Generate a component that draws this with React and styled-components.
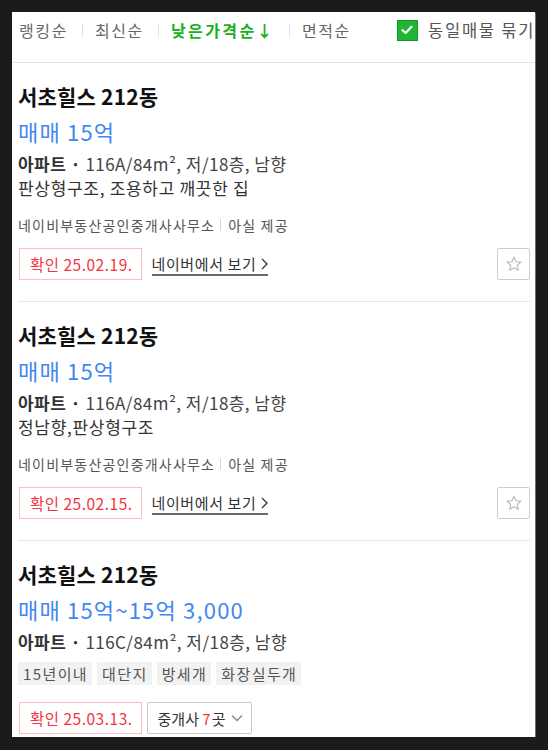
import styled, { createGlobalStyle } from "styled-components";

const GlobalStyle = createGlobalStyle`
    body {
        margin: 0;
        background: #1b1b1b;
        font-family: "Noto Sans CJK KR", "Noto Sans", sans-serif;
    }
`;

const sorts = [
    { label: "랭킹순" },
    { label: "최신순" },
    { label: "낮은가격순↓", active: true },
    { label: "면적순" },
];

const articles = [
    {
        price: "매매 15억",
        spec: "116A/84m², 저/18층, 남향",
        desc: "판상형구조, 조용하고 깨끗한 집",
        confirm: "25.02.19.",
    },
    {
        price: "매매 15억",
        spec: "116A/84m², 저/18층, 남향",
        desc: "정남향,판상형구조",
        confirm: "25.02.15.",
    },
    {
        price: "매매 15억~15억 3,000",
        spec: "116C/84m², 저/18층, 남향",
        tags: ["15년이내", "대단지", "방세개", "화장실두개"],
        confirm: "25.03.13.",
        brokers: 7,
    },
];

const App = () => {
    return (
        <>
            <GlobalStyle />
            <Panel>
                <SortBar>
                    {sorts.map((s, i) => (
                        <SortItem key={s.label}>
                            {i > 0 && <SortDivider />}
                            <SortLabel $active={s.active}>{s.label}</SortLabel>
                        </SortItem>
                    ))}
                    <GroupToggle>
                        <CheckBox>
                            <svg width="12" height="10" viewBox="0 0 12 10">
                                <path d="M1.5 5.2 L4.6 8 L10.5 1.8" fill="none" stroke="#fff" strokeWidth="2.2" strokeLinecap="round" strokeLinejoin="round" />
                            </svg>
                        </CheckBox>
                        <GroupLabel>동일매물 묶기</GroupLabel>
                    </GroupToggle>
                </SortBar>

                <List>
                    {articles.map((a, i) => (
                        <Card key={i} $last={i === articles.length - 1}>
                            <Title>서초힐스 212동</Title>
                            <Price>{a.price}</Price>
                            <Spec>
                                <b>아파트 · </b>{a.spec}
                            </Spec>
                            {a.desc && <Desc>{a.desc}</Desc>}
                            {a.tags ? (
                                <Tags>
                                    {a.tags.map((t) => <Tag key={t}>{t}</Tag>)}
                                </Tags>
                            ) : (
                                <Agency>
                                    네이비부동산공인중개사사무소
                                    <AgencyDivider />
                                    아실 제공
                                </Agency>
                            )}
                            <Actions $tight={!!a.tags}>
                                <Confirm>확인 {a.confirm}</Confirm>
                                {a.brokers ? (
                                    <BrokerButton>
                                        중개사&nbsp;<em>{a.brokers}</em>곳
                                        <svg width="12" height="8" viewBox="0 0 12 8">
                                            <path d="M1 1.5 L6 6.5 L11 1.5" fill="none" stroke="#888" strokeWidth="1.4" />
                                        </svg>
                                    </BrokerButton>
                                ) : (
                                    <>
                                        <NaverLink>
                                            네이버에서 보기
                                            <svg width="7" height="12" viewBox="0 0 7 12">
                                                <path d="M1 1 L6 6 L1 11" fill="none" stroke="#333" strokeWidth="1.3" />
                                            </svg>
                                        </NaverLink>
                                        <StarButton>
                                            <svg width="18" height="18" viewBox="0 0 24 24">
                                                <path d="M12 2.8 L14.7 8.9 L21.3 9.5 L16.3 13.9 L17.8 20.4 L12 17 L6.2 20.4 L7.7 13.9 L2.7 9.5 L9.3 8.9 Z" fill="none" stroke="#b5b5b5" strokeWidth="1.4" strokeLinejoin="round" />
                                            </svg>
                                        </StarButton>
                                    </>
                                )}
                            </Actions>
                        </Card>
                    ))}
                </List>
            </Panel>
        </>
    );
};

const Panel = styled.div`
    margin: 12px 0 0 12px;
    width: 523px;
    height: 725px;
    background: #fff;
    overflow: hidden;
    box-shadow: 1px 1px 0 #707070;
`;

const SortBar = styled.div`
    display: flex;
    align-items: flex-start;
    height: 51px;
    padding: 7px 0 0 7px;
    box-sizing: border-box;
    border-bottom: 1px solid #e4e4e4;
    white-space: nowrap;
`;

const SortItem = styled.div`
    display: flex;
    align-items: center;
    height: 22px;
`;

const SortDivider = styled.span`
    width: 1px;
    height: 13px;
    background: #e0e0e0;
    margin: 0 12px 0 14px;
`;

const SortLabel = styled.span`
    font-size: 16px;
    line-height: 22px;
    letter-spacing: ${(p) => (p.$active ? "2.4px" : "1.6px")};
    color: ${(p) => (p.$active ? "#1aaf1e" : "#666")};
    font-weight: ${(p) => (p.$active ? 700 : 400)};
`;

const GroupToggle = styled.div`
    display: flex;
    align-items: center;
    margin-left: 46px;
    height: 22px;
`;

const CheckBox = styled.span`
    display: flex;
    align-items: center;
    justify-content: center;
    width: 21px;
    height: 21px;
    box-sizing: border-box;
    background: #20b534;
    border: 1px solid #17962a;
    margin-right: 10px;
`;

const GroupLabel = styled.span`
    font-size: 16.5px;
    line-height: 22px;
    letter-spacing: 1.8px;
    color: #555;
`;

const List = styled.div`
    padding: 0 5px 0 6px;
`;

const Card = styled.div`
    padding: 20px 0 21px;
    border-bottom: ${(p) => (p.$last ? "none" : "1px solid #e8e8e8")};
`;

const Title = styled.div`
    font-size: 21px;
    line-height: 26px;
    font-weight: 700;
    color: #111;
    letter-spacing: 0.2px;
`;

const Price = styled.div`
    margin-top: 6px;
    font-size: 22px;
    line-height: 32px;
    color: #4288f0;
    letter-spacing: 1.2px;
`;

const Spec = styled.div`
    margin-top: 5px;
    font-size: 17px;
    line-height: 24px;
    color: #444;
    letter-spacing: 0.45px;
    b {
        font-weight: 700;
        color: #333;
    }
`;

const Desc = styled.div`
    font-size: 17px;
    line-height: 24px;
    color: #333;
    letter-spacing: 0.7px;
`;

const Agency = styled.div`
    display: flex;
    align-items: center;
    margin-top: 15px;
    font-size: 14px;
    line-height: 20px;
    color: #555;
    letter-spacing: 1.2px;
`;

const AgencyDivider = styled.span`
    width: 1px;
    height: 12px;
    background: #d5d5d5;
    margin: 0 7px 0 5px;
`;

const Tags = styled.div`
    display: flex;
    gap: 5px;
    margin-top: 8px;
`;

const Tag = styled.span`
    height: 23px;
    line-height: 23px;
    padding: 0 4px 0 5px;
    background: #f2f2f2;
    font-size: 15px;
    color: #555;
    letter-spacing: 1.4px;
`;

const Actions = styled.div`
    display: flex;
    align-items: center;
    margin-top: ${(p) => (p.$tight ? "17px" : "13px")};
    height: 32px;
`;

const Confirm = styled.span`
    display: flex;
    align-items: center;
    height: 32px;
    box-sizing: border-box;
    padding: 0 8px 0 10px;
    margin-left: 1px;
    border: 1px solid #ffbdbd;
    font-size: 15.5px;
    color: #f5333f;
    letter-spacing: 0.5px;
`;

const NaverLink = styled.a`
    display: flex;
    align-items: center;
    gap: 5px;
    margin-left: 10px;
    font-size: 15px;
    line-height: 20px;
    color: #333;
    letter-spacing: 0.6px;
    border-bottom: 2px solid #6a6a6a;
    padding-top: 2px;
    cursor: pointer;
`;

const StarButton = styled.span`
    display: flex;
    align-items: center;
    justify-content: center;
    margin-left: auto;
    width: 33px;
    height: 32px;
    box-sizing: border-box;
    border: 1px solid #cfcfcf;
    border-radius: 2px;
`;

const BrokerButton = styled.span`
    display: flex;
    align-items: center;
    height: 32px;
    box-sizing: border-box;
    padding: 0 8px 0 10px;
    margin-left: 5px;
    border: 1px solid #c8c8c8;
    border-radius: 2px;
    font-size: 15px;
    color: #333;
    em {
        font-style: normal;
        color: #f5333f;
        margin-right: 1px;
    }
    svg {
        margin-left: 6px;
    }
`;

export default App;
